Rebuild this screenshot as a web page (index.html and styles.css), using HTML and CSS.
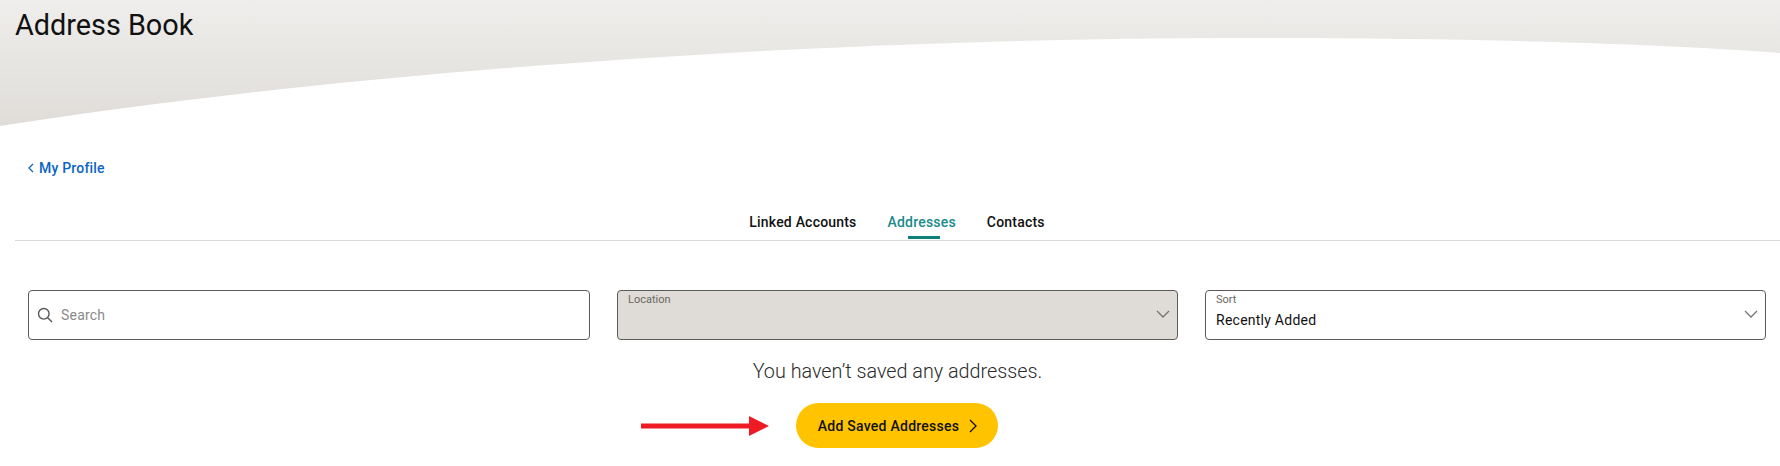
FILE: index.html
```html
<!DOCTYPE html>
<html lang="en">

<head>
    <meta charset="UTF-8">
    <title>Address Book</title>
    <link rel="stylesheet" href="styles.css">
</head>

<body>
    <header class="banner">
        <svg class="banner-curve" viewBox="0 0 1780 130" preserveAspectRatio="none" aria-hidden="true">
            <path d="M0 126 C 330 74, 800 38, 1240 38 C 1440 38, 1640 42, 1780 53 L1780 130 L0 130 Z" fill="#fff"/>
        </svg>
        <h1 class="banner-title">Address Book</h1>
    </header>

    <a class="back-link" href="#">
        <svg class="back-icon" viewBox="0 0 6 10"><path d="M5 1 L1 5 L5 9"/></svg>
        My Profile
    </a>

    <nav class="tabs">
        <a class="tab" href="#">Linked Accounts</a>
        <a class="tab current" href="#">Addresses</a>
        <a class="tab" href="#">Contacts</a>
    </nav>

    <div class="filters">
        <div class="field search">
            <svg class="search-icon" viewBox="0 0 16 16"><circle cx="6.8" cy="6.8" r="5.3"/><path d="M10.7 10.7 L15 15"/></svg>
            <span class="placeholder">Search</span>
        </div>
        <div class="field select disabled">
            <div>
                <div class="field-label">Location</div>
            </div>
            <svg class="select-icon" viewBox="0 0 14 8"><path d="M1 1 L7 7 L13 1"/></svg>
        </div>
        <div class="field select">
            <div>
                <div class="field-label">Sort</div>
                <div class="field-value">Recently Added</div>
            </div>
            <svg class="select-icon" viewBox="0 0 14 8"><path d="M1 1 L7 7 L13 1"/></svg>
        </div>
    </div>

    <section class="empty">
        <p class="empty-text">You haven’t saved any addresses.</p>
        <div class="empty-action">
            <a class="add-btn" href="#">
                Add Saved Addresses
                <svg class="add-icon" viewBox="0 0 8 14"><path d="M1 1 L7 7 L1 13"/></svg>
            </a>
            <svg class="arrow" viewBox="0 0 128 20"><path d="M0 7.5 H108 V0 L128 10 L108 20 V12.5 H0 Z"/></svg>
        </div>
    </section>
</body>

</html>
```

FILE: styles.css
```css
* {
    box-sizing: border-box;
}

html,
body {
    height: 466px;
    overflow: hidden;
}

body {
    margin: 0;
    background: #fff;
    color: #111;
    font-family: Roboto, "Liberation Sans", sans-serif;
}

a {
    text-decoration: none;
}

.banner {
    position: relative;
    height: 130px;
    padding: 6px 15px 0;
    background: linear-gradient(#efeeec, #dfdcd8);
}

.banner-curve {
    position: absolute;
    left: 0;
    top: 0;
    width: 100%;
    height: 100%;
}

.banner-title {
    position: relative;
    margin: 0;
    font-size: 28.8px;
    font-weight: 400;
    line-height: 38px;
}

.back-link {
    display: flex;
    align-items: center;
    gap: 5px;
    margin: 28px 0 0 28px;
    height: 20px;
    color: #0b65c2;
    font-size: 14px;
    font-weight: 500;
    letter-spacing: .2px;
}

.back-icon {
    width: 6px;
    height: 10px;
    fill: none;
    stroke: #0b65c2;
    stroke-width: 1.2;
}

.tabs {
    display: flex;
    justify-content: center;
    gap: 31px;
    margin: 33px 0 0 15px;
    height: 30px;
    padding: 1px 1px 0 0;
    border-bottom: 1px solid #d9d9d9;
}

.tab {
    position: relative;
    color: #111;
    font-size: 14px;
    font-weight: 500;
    letter-spacing: .2px;
    line-height: 20px;
}

.tab.current {
    color: #1a8a8a;
}

.tab.current::after {
    content: "";
    position: absolute;
    left: 50%;
    bottom: 1px;
    width: 32px;
    height: 3px;
    margin-left: -14px;
    background: #0f7f7c;
}

.filters {
    display: grid;
    grid-template-columns: 562px 561px 561px;
    gap: 27px;
    margin: 49px 0 0 28px;
}

.field {
    display: flex;
    height: 50px;
    border: 1px solid #5f5a57;
    border-radius: 4px;
}

.search {
    align-items: center;
    gap: 8px;
    padding: 0 8px;
}

.search-icon {
    width: 16px;
    height: 16px;
    fill: none;
    stroke: #555;
    stroke-width: 1.4;
}

.placeholder {
    color: #8a8a8a;
    font-size: 14px;
    letter-spacing: .2px;
}

.select {
    justify-content: space-between;
    align-items: center;
    padding: 0 7px 0 10px;
}

.select > div {
    align-self: flex-start;
}

.disabled {
    background: #dfdcd7;
}

.field-label {
    margin-top: 2px;
    color: #6b6763;
    font-size: 11px;
    line-height: 14px;
}

.field-value {
    margin-top: 4px;
    font-size: 14px;
    letter-spacing: .25px;
    line-height: 18px;
}

.select-icon {
    width: 14px;
    height: 8px;
    margin: -3px 0 0;
    fill: none;
    stroke: #77736f;
    stroke-width: 1.3;
}

.empty {
    display: flex;
    flex-direction: column;
    align-items: center;
    margin: 20px 0 0 14px;
}

.empty-text {
    margin: 0 0 0 1px;
    color: #2b2b2b;
    font-size: 19.8px;
    font-weight: 300;
    line-height: 24px;
}

.empty-action {
    position: relative;
    margin-top: 19px;
}

.add-btn {
    display: flex;
    align-items: center;
    gap: 10px;
    height: 45px;
    padding: 0 21px 0 22px;
    border-radius: 23px;
    background: #ffc300;
    color: #111;
    font-size: 14px;
    font-weight: 500;
    letter-spacing: .25px;
}

.add-icon {
    width: 8px;
    height: 14px;
    fill: none;
    stroke: #111;
    stroke-width: 1.3;
}

.arrow {
    position: absolute;
    right: 100%;
    top: 13px;
    width: 128px;
    height: 20px;
    margin-right: 27px;
    fill: #ed1c24;
}
```
